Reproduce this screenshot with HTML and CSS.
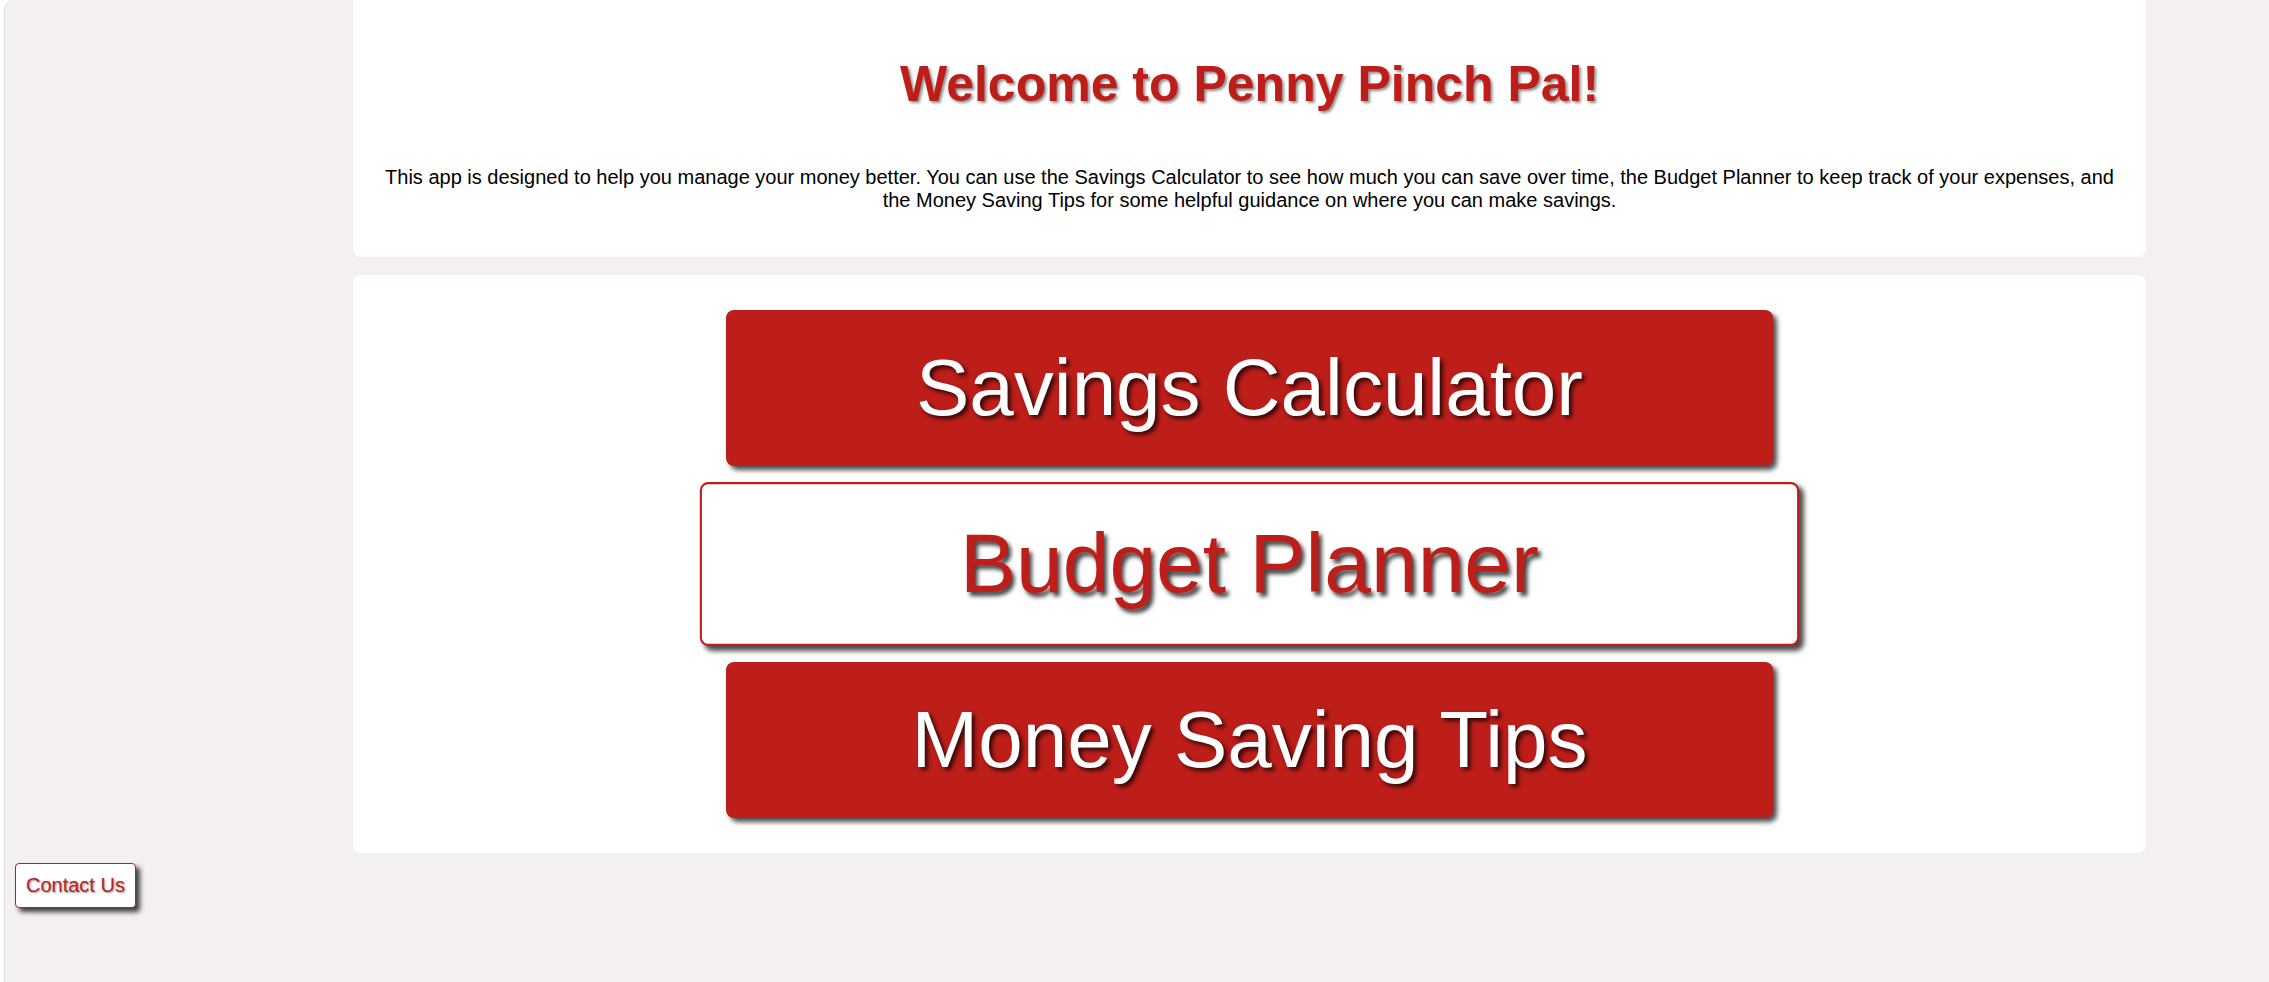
FILE: index.html
```html
<!DOCTYPE html>
<html lang="en">

<head>
    <meta charset="UTF-8">
    <meta name="viewport" content="width=device-width, initial-scale=1.0">
    <title>Penny Pinch Pal</title>
    <link rel="stylesheet" href="styles.css">
</head>

<body>
    <div class="page">
        <main class="content">
            <section class="card intro">
                <h1>Welcome to Penny Pinch Pal!</h1>
                <p>This app is designed to help you manage your money better. You can use the Savings Calculator to see how much you can save over time, the Budget Planner to keep track of your expenses, and the Money Saving Tips for some helpful guidance on where you can make savings.</p>
            </section>

            <section class="card menu">
                <button class="menu-btn">Savings Calculator</button>
                <button class="menu-btn active">Budget Planner</button>
                <button class="menu-btn">Money Saving Tips</button>
            </section>
        </main>

        <footer class="footer">
            <button class="contact-btn">Contact Us</button>
        </footer>
    </div>
</body>

</html>
```

FILE: styles.css
```css
body {
    margin: 0;
    background: #ffffff;
    font-family: "Liberation Sans", Arial, sans-serif;
    color: #000;
}

.page {
    margin-left: 4px;
    min-height: 100vh;
    padding: 0 10px;
    background: #f4f0ef;
    border-left: 1px solid #dcdcdc;
    border-top-left-radius: 10px;
    box-sizing: border-box;
}

.content {
    width: 1793px;
    margin-left: 338px;
    display: flex;
    flex-direction: column;
    gap: 18px;
}

.card {
    background: #ffffff;
    border-radius: 8px;
}

.intro {
    padding: 55px 24px 45px;
    border-radius: 0 0 8px 8px;
    text-align: center;
}

.intro h1 {
    margin: 0 0 53px;
    font-size: 50px;
    line-height: 58px;
    color: #be1e1a;
    text-shadow: 2px 2px 3px rgba(0, 0, 0, 0.45);
}

.intro p {
    margin: 0;
    font-size: 20px;
    line-height: 23px;
}

.menu {
    padding: 35px 0;
    display: flex;
    flex-direction: column;
    align-items: center;
    gap: 20px;
}

.menu-btn {
    width: 1047px;
    padding: 30px 0;
    font-family: inherit;
    font-size: 80px;
    line-height: 92px;
    color: #ffffff;
    background: #be1e1a;
    border: 2px solid #be1e1a;
    border-radius: 8px;
    box-shadow: 4px 4px 5px rgba(0, 0, 0, 0.7);
    text-shadow: 3px 3px 4px rgba(0, 0, 0, 0.75);
    cursor: pointer;
}

.menu-btn.active {
    background: #ffffff;
    color: #be1e1a;
    transform: scale(1.05);
}

.footer {
    padding-top: 10px;
}

.contact-btn {
    padding: 10px 10px;
    font-family: inherit;
    font-size: 20px;
    line-height: 23px;
    color: #be1e1a;
    background: #ffffff;
    border: 1px solid #be1e1a;
    border-radius: 4px;
    box-shadow: 4px 4px 5px rgba(0, 0, 0, 0.75);
    text-shadow: 1px 1px 2px rgba(0, 0, 0, 0.45);
    cursor: pointer;
}
```
